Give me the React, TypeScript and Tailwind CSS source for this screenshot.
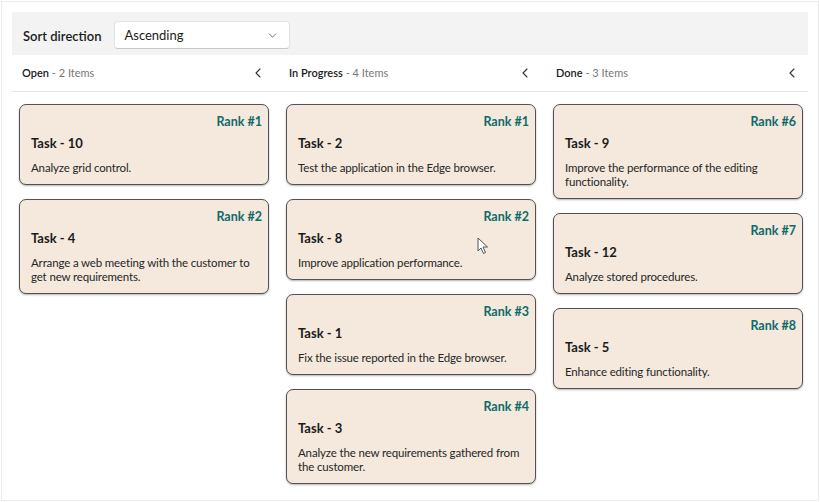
import { ChevronDown, ChevronLeft } from "lucide-react";

type Task = { id: number; rank: number; text: string };

const columns: { title: string; tasks: Task[] }[] = [
  {
    title: "Open",
    tasks: [
      { id: 10, rank: 1, text: "Analyze grid control." },
      { id: 4, rank: 2, text: "Arrange a web meeting with the customer to get new requirements." },
    ],
  },
  {
    title: "In Progress",
    tasks: [
      { id: 2, rank: 1, text: "Test the application in the Edge browser." },
      { id: 8, rank: 2, text: "Improve application performance." },
      { id: 1, rank: 3, text: "Fix the issue reported in the Edge browser." },
      { id: 3, rank: 4, text: "Analyze the new requirements gathered from the customer." },
    ],
  },
  {
    title: "Done",
    tasks: [
      { id: 9, rank: 6, text: "Improve the performance of the editing functionality." },
      { id: 12, rank: 7, text: "Analyze stored procedures." },
      { id: 5, rank: 8, text: "Enhance editing functionality." },
    ],
  },
];

function Card({ task }: { task: Task }) {
  return (
    <div className="flex flex-col rounded-[7px] border border-[#525252] bg-[#f5e9dd] pb-[9px] pl-[11px] pr-[6px] pt-[8px] shadow-[0_1px_2px_rgba(0,0,0,0.3)]">
      <div className="text-right text-[12.5px] font-bold leading-[18px] text-[#0d6b6b]">Rank #{task.rank}</div>
      <div className="mt-[2px] text-[13px] font-bold leading-[20px] text-[#1b1b1b]">Task - {task.id}</div>
      <div className="mt-[8px] pr-[6px] text-[11.5px] leading-[14px] tracking-[-0.15px] text-[#262626]">{task.text}</div>
    </div>
  );
}

function Cursor() {
  return (
    <svg className="absolute left-[477px] top-[237px]" width="12" height="18" viewBox="0 0 12 18">
      <path d="M1 1 L1 14 L4 11 L6.5 16.5 L8.5 15.5 L6 10 L10.5 10 Z" fill="#ffffff" stroke="#555" strokeWidth="1" strokeLinejoin="round" />
    </svg>
  );
}

export default function App() {
  return (
    <div className="relative h-[502px] w-[820px] bg-white p-px" style={{ fontFamily: 'Lato, "Noto Sans", sans-serif' }}>
      <div className="h-full border border-[#ececec] px-[10px] pt-[10px]">
        <div className="flex h-[43px] items-center bg-[#f3f3f3] pl-[11px] pt-[3px]">
          <span className="mt-[4px] text-[13px] font-semibold text-[#1b1b1b]">Sort direction</span>
          <div className="ml-[13px] flex h-[28px] w-[176px] items-center justify-between rounded-[4px] border border-[#e2e2e2] border-b-[#c8c8c8] bg-white pl-[9px] pr-[10px]">
            <span className="mt-[2px] text-[13px] text-[#1b1b1b]">Ascending</span>
            <ChevronDown size={13} strokeWidth={1.5} className="text-[#555]" />
          </div>
        </div>

        <div className="grid grid-cols-[262px_262px_262px] gap-x-[5px] border-b border-[#e6e6e6]">
          {columns.map((c) => (
            <div key={c.title} className="flex h-[36px] items-center justify-between pl-[10px] pr-[8px]">
              <span className="text-[11px] text-[#1b1b1b]">
                <span className="font-semibold">{c.title}</span>
                <span className="text-[#777]"> - {c.tasks.length} Items</span>
              </span>
              <ChevronLeft size={16} strokeWidth={1.6} className="text-[#333]" />
            </div>
          ))}
        </div>

        <div className="grid grid-cols-[262px_262px_262px] gap-x-[5px] pt-[12px]">
          {columns.map((c) => (
            <div key={c.title} className="flex flex-col gap-[14px] pl-[7px] pr-[5px]">
              {c.tasks.map((t) => (
                <Card key={t.id} task={t} />
              ))}
            </div>
          ))}
        </div>
      </div>
      <Cursor />
    </div>
  );
}
